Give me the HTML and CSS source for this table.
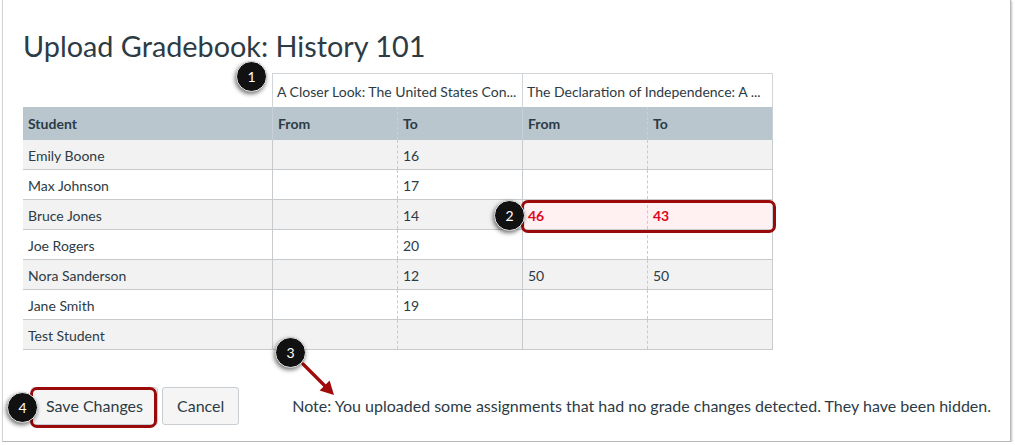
FILE: index.html
```html
<!DOCTYPE html>
<html lang="en">
<head>
<meta charset="utf-8">
<title>Upload Gradebook</title>
<link rel="stylesheet" href="styles.css">
</head>
<body>
<div class="frame">
  <h1 class="title">Upload Gradebook: History 101</h1>
  <div class="gradetable">
    <div class="row assign-row">
      <div class="cell blank"></div>
      <div class="cell assign">A Closer Look: The United States Con...</div>
      <div class="cell assign last">The Declaration of Independence: A ...</div>
    </div>
    <div class="row head-row">
      <div class="cell c1">Student</div>
      <div class="cell c2">From</div>
      <div class="cell c3">To</div>
      <div class="cell c4">From</div>
      <div class="cell c5">To</div>
    </div>
    <div class="row data odd">
      <div class="cell c1">Emily Boone</div><div class="cell c2"></div><div class="cell c3">16</div><div class="cell c4"></div><div class="cell c5"></div>
    </div>
    <div class="row data">
      <div class="cell c1">Max Johnson</div><div class="cell c2"></div><div class="cell c3">17</div><div class="cell c4"></div><div class="cell c5"></div>
    </div>
    <div class="row data odd">
      <div class="cell c1">Bruce Jones</div><div class="cell c2"></div><div class="cell c3">14</div><div class="cell c4 changed">46</div><div class="cell c5 changed">43</div>
    </div>
    <div class="row data">
      <div class="cell c1">Joe Rogers</div><div class="cell c2"></div><div class="cell c3">20</div><div class="cell c4"></div><div class="cell c5"></div>
    </div>
    <div class="row data odd">
      <div class="cell c1">Nora Sanderson</div><div class="cell c2"></div><div class="cell c3">12</div><div class="cell c4">50</div><div class="cell c5">50</div>
    </div>
    <div class="row data">
      <div class="cell c1">Jane Smith</div><div class="cell c2"></div><div class="cell c3">19</div><div class="cell c4"></div><div class="cell c5"></div>
    </div>
    <div class="row data odd">
      <div class="cell c1">Test Student</div><div class="cell c2"></div><div class="cell c3"></div><div class="cell c4"></div><div class="cell c5"></div>
    </div>
  </div>
  <div class="actions">
    <button class="btn save" type="button">Save Changes</button>
    <button class="btn cancel" type="button">Cancel</button>
    <p class="note">Note: You uploaded some assignments that had no grade changes detected. They have been hidden.</p>
  </div>

  <div class="ring ring-row"></div>
  <div class="ring ring-save"></div>
  <svg class="arrow" width="60" height="50" viewBox="0 0 60 50" aria-hidden="true">
    <line x1="10" y1="9" x2="32" y2="31" stroke="#a00a0a" stroke-width="3.2" stroke-linecap="round"/>
    <polygon points="41,40 36.6,25.6 26.6,35.6" fill="#a00a0a"/>
  </svg>
  <div class="badge b1">1</div>
  <div class="badge b2">2</div>
  <div class="badge b3">3</div>
  <div class="badge b4">4</div>
</div>
</body>
</html>
```

FILE: styles.css
```css
* { box-sizing: border-box; }

body {
  margin: 0;
  background: #fff;
  font-family: Lato, "Noto Sans", sans-serif;
  color: #2d3b45;
}

.frame {
  position: relative;
  margin-left: 2px;
  width: 1009px;
  height: 442px;
  border-left: 1px solid #d4d4d4;
  border-right: 1px solid #b8b8b8;
  border-bottom: 1px solid #b8b8b8;
  box-shadow: 1px 1px 2px rgba(0, 0, 0, 0.25);
  padding: 0 19px 0 20px;
}

.title {
  margin: 0;
  padding-top: 30px;
  font-size: 28.8px;
  line-height: 32px;
  font-weight: 400;
  color: #2d3b45;
  height: 63px;
}

.gradetable {
  margin-top: 10px;
  width: 750px;
}

.row {
  display: grid;
  grid-template-columns: 249px 125px 125px 125px 126px;
}

.assign-row {
  grid-template-columns: 249px 250px 251px;
  height: 34px;
}

.cell {
  padding: 0 5px;
  display: flex;
  align-items: center;
  font-size: 14px;
  white-space: nowrap;
  overflow: hidden;
}

.assign {
  border-top: 1px solid #d1d5d8;
  border-left: 1px solid #d1d5d8;
  font-size: 14px;
  padding: 1px 4px 0;
}

.assign.last {
  border-right: 1px solid #d1d5d8;
}

.head-row {
  height: 33px;
  background: #b9c6ce;
  font-weight: 700;
}

.head-row .c2, .head-row .c4 { border-left: 1px solid #c7d1d7; }
.head-row .c3, .head-row .c5 { border-left: 1px dashed #c7d1d7; }
.head-row .c5 { border-right: 1px solid #c7d1d7; }

.data {
  height: 30px;
  border-bottom: 1px solid #c7cbce;
}

.data .cell { padding-top: 1px; }

.data.odd { background: #f2f2f2; }

.data .c2, .data .c4 { border-left: 1px solid #c7cbce; }
.data .c3, .data .c5 { border-left: 1px dashed #c7cbce; }
.data .c5 { border-right: 1px solid #c7cbce; }

.changed {
  background: #fff1f2;
  color: #e0061f;
  font-weight: 700;
}

.actions {
  display: flex;
  align-items: center;
  margin-top: 37px;
  padding-left: 8px;
}

.btn {
  font-family: Lato, "Noto Sans", sans-serif;
  font-size: 16px;
  line-height: 20px;
  padding: 8px 14px;
  border: 1px solid #c7cdd1;
  border-radius: 3px;
  background: #f5f5f5;
  color: #2d3b45;
}

.cancel { margin-left: 4px; }

.note {
  margin: 0 0 0 auto;
  font-size: 16px;
  line-height: 20px;
}

.ring {
  position: absolute;
  border: 3px solid #9b0a0a;
  border-radius: 7px;
}

.ring-row {
  left: 518px;
  top: 200px;
  width: 255px;
  height: 33px;
}

.ring-save {
  left: 27px;
  top: 387px;
  width: 127px;
  height: 41px;
}

.arrow {
  position: absolute;
  left: 290px;
  top: 355px;
}

.badge {
  position: absolute;
  width: 31px;
  height: 31px;
  border-radius: 50%;
  background: #111;
  border: 1px solid #e6e6e6;
  color: #fff;
  font-size: 14px;
  display: flex;
  align-items: center;
  justify-content: center;
  box-shadow: -1px 2px 4px rgba(0, 0, 0, 0.55);
  z-index: 2;
}

.b1 { left: 233px; top: 61px; }
.b2 { left: 491px; top: 200px; }
.b3 { left: 272px; top: 337px; }
.b4 { left: 4px; top: 392px; }
```
